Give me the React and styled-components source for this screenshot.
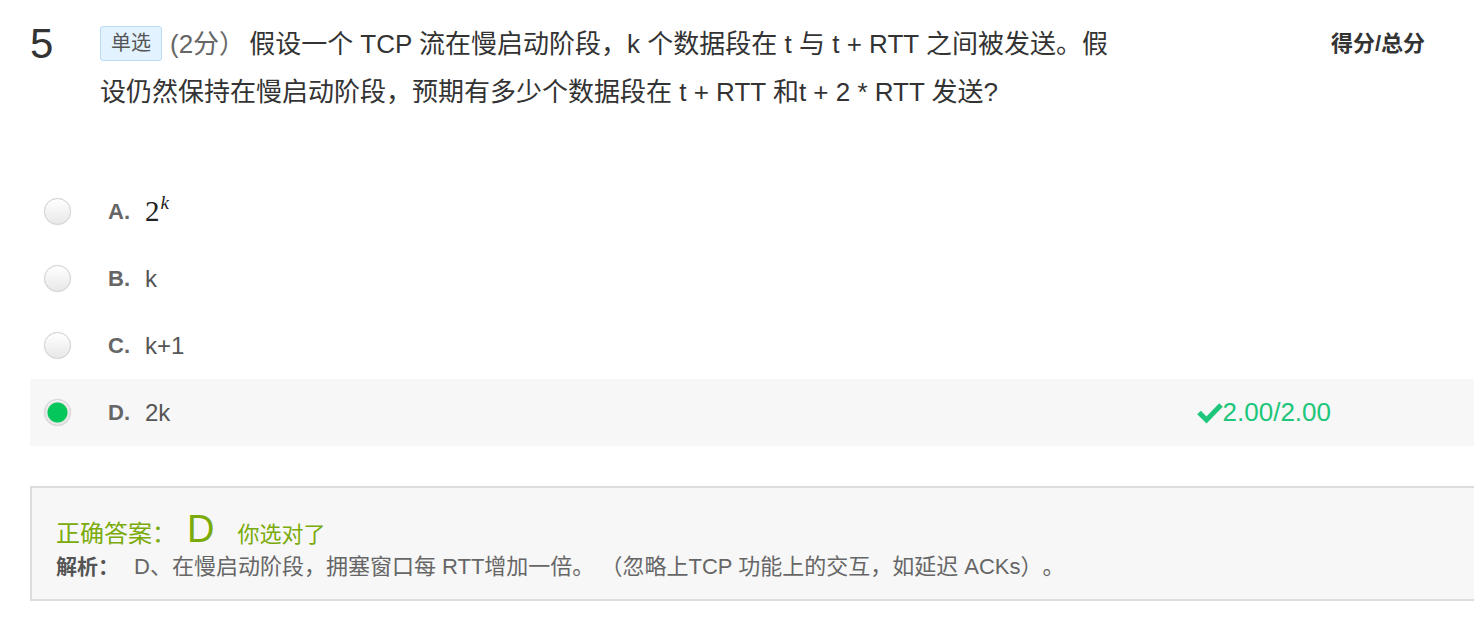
import React from "react";
import styled, { createGlobalStyle } from "styled-components";

const Global = createGlobalStyle`
  html, body { margin: 0; padding: 0; background: #fff; }
  body {
    font-family: "Liberation Sans", "Noto Sans CJK SC", sans-serif;
    color: #333;
    text-spacing-trim: space-all;
  }
  #root { width: 1474px; overflow: hidden; }
`;

const Page = styled.div`
  padding: 20px 0 0 30px;
`;

const Header = styled.div`
  display: flex;
  align-items: flex-start;
`;

const Num = styled.div`
  width: 70px;
  font-size: 42px;
  line-height: 48px;
  color: #333;
`;

const Question = styled.div`
  width: 1030px;
  font-size: 26px;
  line-height: 48px;
  color: #333;
`;

const Tag = styled.span`
  display: inline-block;
  height: 33px;
  line-height: 33px;
  padding: 0 10px;
  font-size: 20px;
  color: #555;
  background: #e3f2ff;
  border: 1px solid #b9dcfa;
  border-radius: 3px;
  vertical-align: 3px;
  margin-right: 8px;
`;

const Score = styled.span`
  color: #666;
  margin-right: 4px;
`;

const Body = styled.span``;

const ScoreLabel = styled.div`
  margin-left: auto;
  margin-right: 49px;
  font-size: 22px;
  font-weight: bold;
  line-height: 48px;
  color: #333;
`;

const Options = styled.div`
  margin-top: 62px;
`;

const Row = styled.div`
  display: flex;
  align-items: center;
  height: 67px;
  background: ${(p) => (p.$active ? "#f7f7f7" : "transparent")};
`;

const Radio = styled.span`
  box-sizing: border-box;
  width: 27px;
  height: 27px;
  border-radius: 50%;
  margin-left: 14px;
  border: 1px solid #cfcfcf;
  background: ${(p) =>
    p.$checked
      ? "radial-gradient(circle, #05c65a 0, #05c65a 9.5px, #e6e6e6 10.5px, #f2f2f2 100%)"
      : "linear-gradient(#ffffff, #e8e8e8)"};
  box-shadow: inset 0 1px 1px rgba(255,255,255,0.8), 0 0 1px rgba(0,0,0,0.15);
`;

const Label = styled.span`
  margin-left: 37px;
  font-size: 22px;
  font-weight: bold;
  color: #666;
  width: 37px;
`;

const OptText = styled.span`
  font-size: 24px;
  color: #555;
`;

const MathBase = styled.span`
  font-family: "Liberation Serif", "DejaVu Serif", serif;
  font-size: 29px;
  color: #222;
`;

const Sup = styled.sup`
  font-family: "Liberation Serif", serif;
  font-style: italic;
  font-size: 19px;
  vertical-align: 12px;
  line-height: 0;
  margin-left: 1px;
`;

const Gain = styled.span`
  margin-left: auto;
  margin-right: 143px;
  display: flex;
  align-items: center;
  font-size: 26px;
  color: #1dc67a;
`;

const AnswerBox = styled.div`
  margin-top: 40px;
  margin-right: -10px;
  border: 2px solid #dddddd;
  border-right: none;
  background: #f7f7f7;
  height: 91px;
  padding: 20px 0 0 24px;
`;

const Correct = styled.div`
  display: flex;
  align-items: baseline;
  color: #7aab0a;
  height: 44px;
`;

const CorrectLabel = styled.span`
  font-size: 24px;
`;

const CorrectLetter = styled.span`
  font-size: 38px;
  margin: 0 23px 0 11px;
`;

const CorrectMsg = styled.span`
  font-size: 22px;
`;

const Analysis = styled.div`
  font-size: 22px;
  color: #666;
  line-height: 30px;
`;

const AnalysisLabel = styled.b`
  color: #555;
  font-size: 21px;
  margin-right: 15px;
`;

const options = [
  { key: "A", math: true },
  { key: "B", text: "k" },
  { key: "C", text: "k+1" },
  { key: "D", text: "2k", checked: true },
];

export default function App() {
  return (
    <>
      <Global />
      <Page>
        <Header>
          <Num>5</Num>
          <Question>
            <Tag>单选</Tag>
            <Score>(2分）</Score>
            <Body>
              假设一个 TCP 流在慢启动阶段，k 个数据段在 t 与 t + RTT 之间被发送。假设仍然保持在慢启动阶段，预期有多少个数据段在 t + RTT 和t + 2 * RTT 发送?
            </Body>
          </Question>
          <ScoreLabel>得分/总分</ScoreLabel>
        </Header>
        <Options>
          {options.map((o) => (
            <Row key={o.key} $active={o.checked}>
              <Radio $checked={o.checked} />
              <Label>{o.key}.</Label>
              {o.math ? (
                <MathBase>
                  2<Sup>k</Sup>
                </MathBase>
              ) : (
                <OptText>{o.text}</OptText>
              )}
              {o.checked && (
                <Gain>
                  <svg width="26" height="22" viewBox="0 0 26 22">
                    <path d="M2 10.5 L9.5 18 L24 3" fill="none" stroke="#1dc67a" strokeWidth="5" />
                  </svg>
                  2.00/2.00
                </Gain>
              )}
            </Row>
          ))}
        </Options>
        <AnswerBox>
          <Correct>
            <CorrectLabel>正确答案：</CorrectLabel>
            <CorrectLetter>D</CorrectLetter>
            <CorrectMsg>你选对了</CorrectMsg>
          </Correct>
          <Analysis>
            <AnalysisLabel>解析：</AnalysisLabel>
            D、在慢启动阶段，拥塞窗口每 RTT增加一倍。 （忽略上TCP 功能上的交互，如延迟 ACKs）。
          </Analysis>
        </AnswerBox>
      </Page>
    </>
  );
}
